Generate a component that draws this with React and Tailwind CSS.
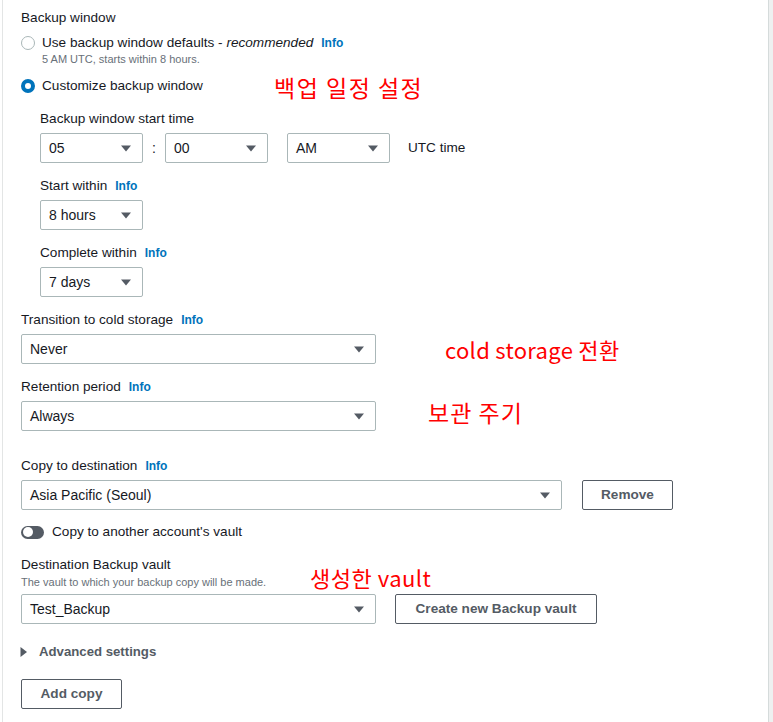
import React from "react";

function Caret() {
  return (
    <svg width="10" height="7" viewBox="0 0 10 7" className="shrink-0">
      <polygon points="0,0.5 10,0.5 5,6.5" fill="#545b64" />
    </svg>
  );
}

function Select({ value, className }) {
  return (
    <div
      className={`h-[30px] border border-[#aab7b8] rounded-[2px] flex items-center justify-between pl-[8px] pr-[11px] bg-white ${className}`}
    >
      <span className="text-[14px] text-[#16191f]">{value}</span>
      <Caret />
    </div>
  );
}

function Label({ children, info }) {
  return (
    <div className="h-5 flex items-center text-[13.6px] text-[#16191f]">
      <span>{children}</span>
      {info && (
        <span className="ml-[8px] text-[12px] font-bold text-[#0073bb]">Info</span>
      )}
    </div>
  );
}

function Button({ children, className }) {
  return (
    <div
      className={`h-[30px] border border-[#545b64] rounded-[2px] bg-white flex items-center justify-center text-[13.6px] font-bold text-[#545b64] ${className}`}
    >
      {children}
    </div>
  );
}

function Note({ children, className }) {
  return (
    <div
      className={`absolute whitespace-nowrap leading-none text-[#ff0000] font-['Noto_Sans_CJK_KR','Noto_Sans',sans-serif] ${className}`}
    >
      {children}
    </div>
  );
}

export default function App() {
  return (
    <div className="w-[773px] h-[722px] flex bg-[#eef0f0] overflow-hidden font-['Liberation_Sans',Arial,sans-serif]">
      <div className="w-[769px] h-full bg-white flex">
        <div className="w-[2px] shrink-0" />
        <div className="flex-1 relative border-l border-[#e3e5e5] border-r border-r-[#d5dbdb] pl-[18px] pt-[8px]">
          <Label>Backup window</Label>

          <div className="mt-[6px] flex items-center h-[18px]">
            <span className="w-[14px] h-[14px] rounded-full border border-[#aab7b8] bg-white shrink-0" />
            <span className="ml-[7px] text-[13.6px] text-[#16191f]">
              Use backup window defaults - <i>recommended</i>
            </span>
            <span className="ml-[8px] text-[12px] font-bold text-[#0073bb]">Info</span>
          </div>
          <div className="ml-[21px] h-[14px] flex items-center text-[11px] text-[#687078]">
            5 AM UTC, starts within 8 hours.
          </div>

          <div className="mt-[10px] flex items-center h-5">
            <span className="w-[14px] h-[14px] rounded-full border-[4px] border-[#0073bb] bg-white shrink-0" />
            <span className="ml-[7px] text-[13.6px] text-[#16191f]">Customize backup window</span>
          </div>

          <div className="pl-[19px]">
            <div className="mt-[13px]">
              <Label>Backup window start time</Label>
            </div>
            <div className="mt-[4px] flex items-center">
              <Select value="05" className="w-[103px]" />
              <span className="w-[22px] text-center text-[14px] text-[#16191f]">:</span>
              <Select value="00" className="w-[103px]" />
              <Select value="AM" className="w-[103px] ml-[19px]" />
              <span className="ml-[18px] text-[13.6px] text-[#16191f]">UTC time</span>
            </div>

            <div className="mt-[13px]">
              <Label info>Start within</Label>
            </div>
            <Select value="8 hours" className="w-[103px] mt-[4px]" />

            <div className="mt-[13px]">
              <Label info>Complete within</Label>
            </div>
            <Select value="7 days" className="w-[103px] mt-[4px]" />
          </div>

          <div className="mt-[13px]">
            <Label info>Transition to cold storage</Label>
          </div>
          <Select value="Never" className="w-[355px] mt-[4px]" />

          <div className="mt-[13px]">
            <Label info>Retention period</Label>
          </div>
          <Select value="Always" className="w-[355px] mt-[4px]" />

          <div className="mt-[25px]">
            <Label info>Copy to destination</Label>
          </div>
          <div className="mt-[4px] flex items-center">
            <Select value="Asia Pacific (Seoul)" className="w-[541px]" />
            <Button className="w-[91px] ml-[20px]">Remove</Button>
          </div>

          <div className="mt-[12px] h-5 flex items-center">
            <span className="w-[23px] h-[13px] rounded-full bg-[#545b64] flex items-center pl-[2px] shrink-0">
              <span className="w-[10px] h-[10px] rounded-full bg-white" />
            </span>
            <span className="ml-[8px] text-[13.6px] text-[#16191f]">Copy to another account's vault</span>
          </div>

          <div className="mt-[13px]">
            <Label>Destination Backup vault</Label>
          </div>
          <div className="h-[14px] flex items-center text-[11px] text-[#687078]">
            The vault to which your backup copy will be made.
          </div>
          <div className="mt-[5px] flex items-center">
            <Select value="Test_Backup" className="w-[355px]" />
            <Button className="w-[202px] ml-[19px]">Create new Backup vault</Button>
          </div>

          <div className="mt-[18px] h-5 flex items-center">
            <svg width="7" height="10" viewBox="0 0 7 10" className="shrink-0 ml-[-1px]">
              <polygon points="0.5,0 7,5 0.5,10" fill="#545b64" />
            </svg>
            <span className="ml-[12px] text-[13.2px] font-bold text-[#545b64]">Advanced settings</span>
          </div>

          <Button className="w-[101px] mt-[17px]">Add copy</Button>

          <Note className="left-[271px] top-[76px] text-[23px] tracking-[1.5px]">백업 일정 설정</Note>
          <Note className="left-[442px] top-[338px] text-[22px] tracking-[0.3px]">cold storage 전환</Note>
          <Note className="left-[425px] top-[401px] text-[23px] tracking-[1px]">보관 주기</Note>
          <Note className="left-[307px] top-[566px] text-[22px] tracking-[0.5px]">생성한 vault</Note>
        </div>
      </div>
    </div>
  );
}
